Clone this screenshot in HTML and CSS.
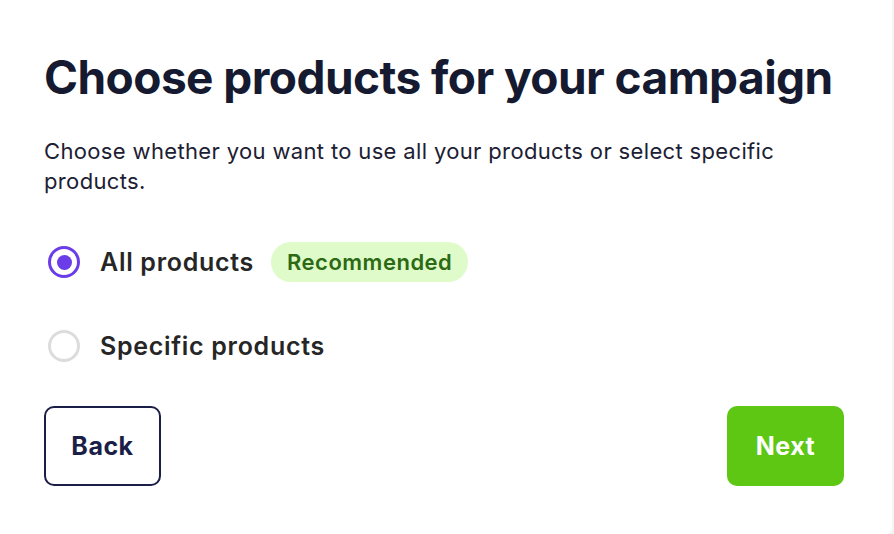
FILE: index.html
```html
<!DOCTYPE html>
<html lang="en">
<head>
<meta charset="utf-8">
<title>Choose products for your campaign</title>
<link rel="stylesheet" href="styles.css">
</head>
<body>
<main class="card">
  <h1 class="title">Choose products for your campaign</h1>
  <p class="subtitle">Choose whether you want to use all your products or select specific products.</p>
  <div class="options">
    <label class="option">
      <span class="radio radio-on"><span class="dot"></span></span>
      <span class="option-label">All products</span>
      <span class="badge">Recommended</span>
    </label>
    <label class="option">
      <span class="radio"></span>
      <span class="option-label">Specific products</span>
    </label>
  </div>
  <div class="actions">
    <button class="btn btn-back">Back</button>
    <button class="btn btn-next">Next</button>
  </div>
</main>
</body>
</html>
```
FILE: styles.css
```css
html, body {
  margin: 0;
  padding: 0;
}
body {
  background: #f4f4f4;
  font-family: Inter, "Liberation Sans", Arial, sans-serif;
}
.card {
  box-sizing: border-box;
  width: 892px;
  height: 534px;
  background: #ffffff;
  border-bottom-right-radius: 6px;
  padding: 49px 48px 0 44px;
  display: flex;
  flex-direction: column;
}
.title {
  margin: 0;
  font-size: 46px;
  line-height: 56px;
  font-weight: 700;
  color: #151a30;
  letter-spacing: -0.55px;
  white-space: nowrap;
}
.subtitle {
  margin: 31px 0 0;
  font-size: 22px;
  line-height: 30px;
  font-weight: 400;
  color: #1c2033;
  letter-spacing: 0.35px;
  max-width: 790px;
}
.options {
  display: flex;
  flex-direction: column;
  gap: 44px;
  margin-top: 46px;
}
.option {
  display: flex;
  align-items: center;
  height: 40px;
}
.radio {
  box-sizing: border-box;
  width: 32px;
  height: 32px;
  border-radius: 50%;
  border: 3px solid #dcdcdc;
  margin-left: 4px;
  display: flex;
  align-items: center;
  justify-content: center;
}
.radio-on {
  border-color: #6a3de8;
}
.dot {
  width: 15px;
  height: 15px;
  border-radius: 50%;
  background: #6a3de8;
}
.option-label {
  margin-left: 20px;
  font-size: 25px;
  font-weight: 600;
  color: #262626;
  letter-spacing: 0.7px;
}
.badge {
  margin-left: 17px;
  height: 40px;
  padding: 0 16px;
  border-radius: 20px;
  background: #defbc9;
  color: #2d6a14;
  font-size: 22px;
  font-weight: 600;
  letter-spacing: 0.5px;
  display: flex;
  align-items: center;
}
.actions {
  display: flex;
  justify-content: space-between;
  margin-top: 40px;
}
.btn {
  box-sizing: border-box;
  width: 117px;
  height: 80px;
  border-radius: 10px;
  font-family: inherit;
  font-size: 25px;
  font-weight: 700;
  letter-spacing: 0.5px;
  cursor: pointer;
}
.btn-back {
  background: #ffffff;
  border: 2px solid #1b1f48;
  color: #1b1f48;
}
.btn-next {
  background: #5dc714;
  border: none;
  color: #ffffff;
}
```
